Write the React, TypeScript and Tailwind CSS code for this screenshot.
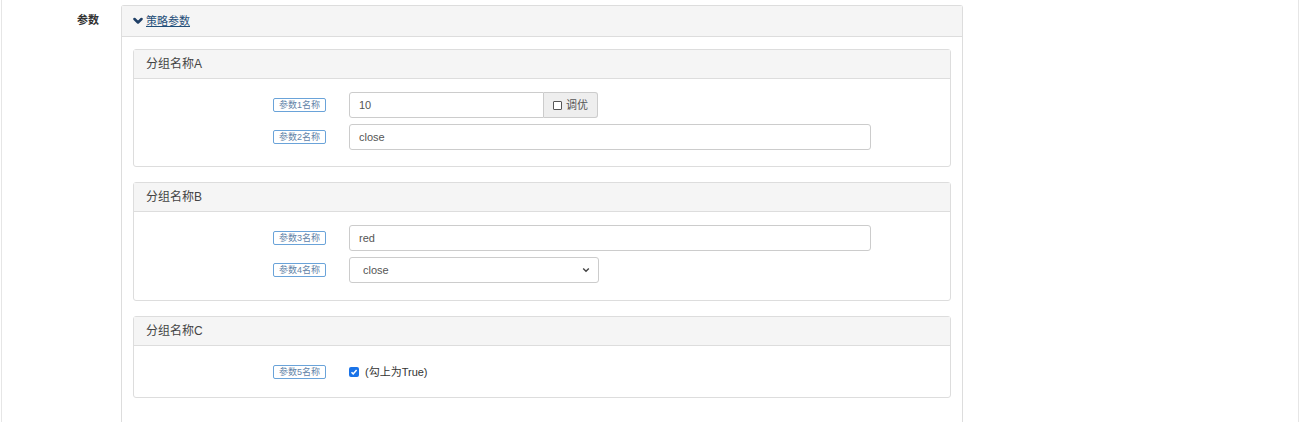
import React from "react";

const font = { fontFamily: '"Liberation Sans", "Noto Sans CJK SC", sans-serif' };

function Badge({ text }: { text: string }) {
  return (
    <span className="inline-flex h-[14px] items-center rounded-[2px] border border-[#6aa3d9] px-[5px] text-[9px] leading-none text-[#6283a8]">
      {text}
    </span>
  );
}

function Row({ label, children }: { label: string; children: React.ReactNode }) {
  return (
    <div className="flex h-[26px] items-center">
      <div className="flex w-[192px] justify-end">
        <Badge text={label} />
      </div>
      <div className="ml-[23px] flex items-center">{children}</div>
    </div>
  );
}

function Group({ title, children, pb }: { title: string; children: React.ReactNode; pb: string }) {
  return (
    <div className="rounded-[3px] border border-[#dddddd] bg-white">
      <div className="flex h-[29px] items-center border-b border-[#dddddd] bg-[#f5f5f5] pl-[12px] text-[12px] text-[#444]">
        {title}
      </div>
      <div className={`flex flex-col gap-[6px] pt-[13px] ${pb}`}>{children}</div>
    </div>
  );
}

function TextInput({ value, w }: { value: string; w: string }) {
  return (
    <div className={`flex h-[26px] items-center rounded-[3px] border border-[#cccccc] bg-white pl-[9px] text-[11px] text-[#555] ${w}`}>
      {value}
    </div>
  );
}

export default function App() {
  return (
    <div className="h-[422px] w-[1300px] overflow-hidden bg-white" style={font}>
      <div className="ml-px flex h-full w-[1298px] border-x border-[#e6e6e6]">
        <div className="w-[119px] shrink-0 pr-[22px] pt-[12px] text-right text-[11px] font-bold text-[#333]">
          参数
        </div>
        <div className="mt-[5px] w-[842px] rounded-t-[3px] border border-b-0 border-[#dddddd]">
          <div className="flex h-[31px] items-center gap-[3px] border-b border-[#dddddd] bg-[#f5f5f5] pl-[11px]">
            <svg width="10" height="8" viewBox="0 0 10 8" className="mt-[-1px]">
              <path d="M1.5 2 L5 5.5 L8.5 2" fill="none" stroke="#1f3f66" strokeWidth="2.5" strokeLinecap="round" strokeLinejoin="round" />
            </svg>
            <span className="text-[11px] text-[#1f4e79] underline">策略参数</span>
          </div>
          <div className="flex flex-col gap-[15px] px-[11px] pt-[12px]">
            <Group title="分组名称A" pb="pb-[16px]">
              <Row label="参数1名称">
                <div className="flex h-[26px]">
                  <div className="flex w-[195px] items-center rounded-l-[3px] border border-[#cccccc] pl-[9px] text-[11px] text-[#555]">
                    10
                  </div>
                  <div className="flex w-[54px] items-center gap-[4px] rounded-r-[3px] border border-l-0 border-[#cccccc] bg-[#eeeeee] pl-[9px] text-[11px] text-[#555]">
                    <span className="inline-block h-[9px] w-[9px] rounded-[1px] border border-[#555] bg-white" />
                    调优
                  </div>
                </div>
              </Row>
              <Row label="参数2名称">
                <TextInput value="close" w="w-[522px]" />
              </Row>
            </Group>
            <Group title="分组名称B" pb="pb-[17px]">
              <Row label="参数3名称">
                <TextInput value="red" w="w-[522px]" />
              </Row>
              <Row label="参数4名称">
                <div className="flex h-[26px] w-[250px] items-center justify-between rounded-[3px] border border-[#cccccc] bg-white pl-[13px] pr-[8px] text-[11px] text-[#555]">
                  <span>close</span>
                  <svg width="8" height="6" viewBox="0 0 8 6">
                    <path d="M1.2 1.5 L4 4.3 L6.8 1.5" fill="none" stroke="#444" strokeWidth="1.4" />
                  </svg>
                </div>
              </Row>
            </Group>
            <Group title="分组名称C" pb="pb-[12px]">
              <Row label="参数5名称">
                <div className="flex items-center gap-[6px] text-[11px] text-[#333]">
                  <span className="flex h-[10px] w-[10px] items-center justify-center rounded-[2px] bg-[#1a73e8]">
                    <svg width="8" height="8" viewBox="0 0 8 8">
                      <path d="M1.5 4.2 L3.2 5.9 L6.6 2" fill="none" stroke="white" strokeWidth="1.5" />
                    </svg>
                  </span>
                  <span>(勾上为True)</span>
                </div>
              </Row>
            </Group>
          </div>
        </div>
      </div>
    </div>
  );
}
